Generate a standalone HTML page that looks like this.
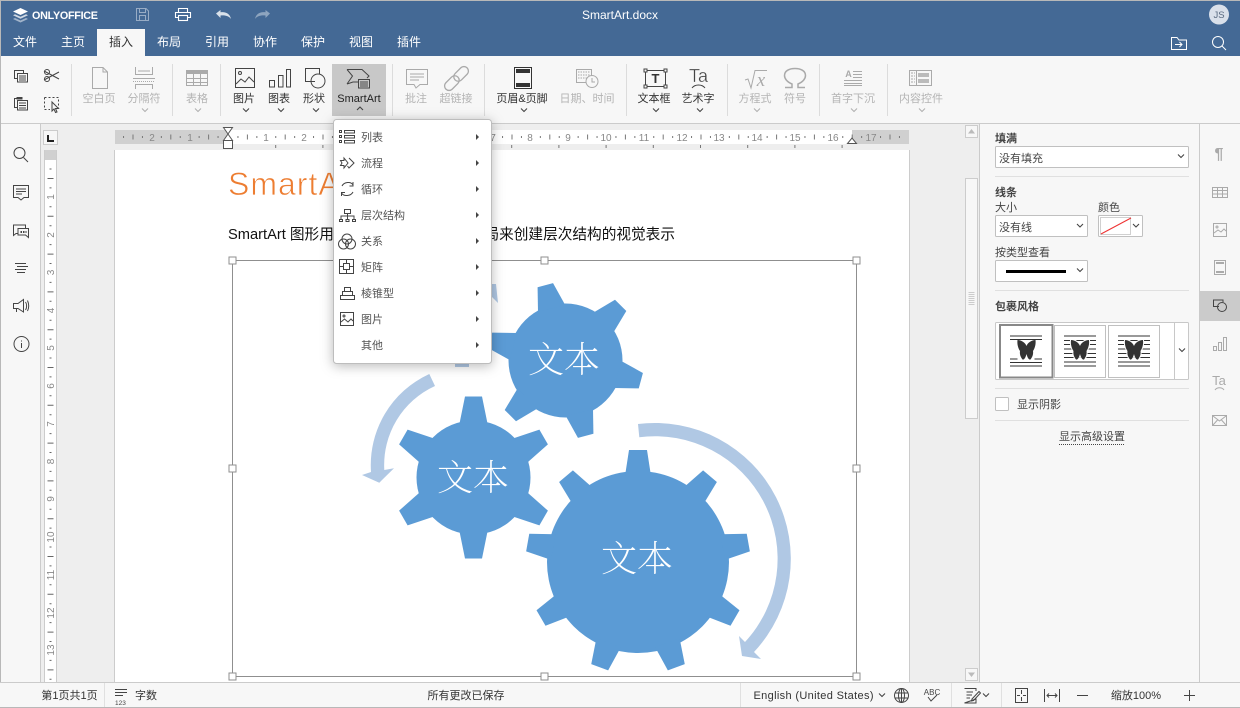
<!DOCTYPE html>
<html><head><meta charset="utf-8"><title>SmartArt.docx</title>
<style>
html,body{margin:0;padding:0;background:#fff;width:1240px;height:708px;overflow:hidden}
svg{display:block;font-family:"Liberation Sans","Noto Sans CJK SC",sans-serif;font-size:11px}
.tab{fill:#fff;font-size:12px;text-anchor:middle}
.l{fill:#333;text-anchor:middle}
.d{fill:#b4b4b4;text-anchor:middle}
.k{fill:none;stroke:#444;stroke-width:1}
.g{fill:none;stroke:#aaa;stroke-width:1}
.w{fill:none;stroke:#fff;stroke-width:1}
.m{fill:#555}
.b{fill:#444;font-weight:bold}
.p{fill:#444}
</style></head><body>
<svg width="1240" height="708" viewBox="0 0 1240 708" xmlns="http://www.w3.org/2000/svg">
<defs>
<path id="cd" d="M-3 -1.5L0 1.5L3 -1.5" fill="none" stroke="#444" stroke-width="1.1"/>
<path id="cg" d="M-3 -1.5L0 1.5L3 -1.5" fill="none" stroke="#b0b0b0" stroke-width="1.1"/>
<path id="ma" d="M0 -3L3 0L0 3Z" fill="#444"/>
<polygon id="t1" points="-9,-112 9,-112 13,-86 -13,-86" fill="#5b9bd5"/>
<polygon id="t2" points="-8.5,-81 8.500,-81 14,-54 -14,-54" fill="#5b9bd5"/>
<polygon id="t3" points="-8,-78 8,-78 14,-54 -14,-54" fill="#5b9bd5"/>
<path id="bf" d="M0 -4C-1 -7 -5 -10 -9 -10C-9.500 -6 -8.500 -2 -6.500 1C-7 4 -6 7 -4 9.500C-2.500 10 -1 8 0 4C1 8 2.500 10 4 9.500C6 7 7 4 6.500 1C8.500 -2 9.500 -6 9 -10C5 -10 1 -7 0 -4Z" fill="#333"/>
<g id="hd"><rect x="-3.500" y="-3.500" width="7" height="7" fill="#fff" stroke="#8f8f8f"/></g>
</defs>

<!-- base -->
<rect width="1240" height="708" fill="#f7f7f7"/>
<rect x="41" y="124" width="938" height="559" fill="#eeeeee"/>
<!-- header -->
<rect x="0" y="0" width="1240" height="56" fill="#446995"/>
<rect x="0" y="0" width="1240" height="1" fill="#b8b8b8"/>
<rect x="97" y="29" width="48" height="27" fill="#f7f7f7"/>
<!-- logo -->
<path d="M20.500 8L28 11.500L20.500 15L13 11.500Z" fill="#fff"/>
<path d="M15 14.200L13 15.200L20.500 18.700L28 15.200L26 14.200L20.500 16.700Z" fill="#fff" opacity=".75"/>
<path d="M15 18L13 19L20.500 22.500L28 19L26 18L20.500 20.500Z" fill="#fff" opacity=".5"/>
<text x="32" y="19" fill="#fff" font-weight="bold" font-size="10.800" textLength="66">ONLYOFFICE</text>
<!-- save etc -->
<g fill="none" stroke="#fff" opacity=".45"><path d="M136.500 8.500H146L148.500 11V20.500H136.500Z"/><path d="M139.500 8.500V12.500H145.500V8.500M139.500 20.500V15.500H145.500V20.500"/></g>
<g fill="none" stroke="#fff" stroke-width="1.100"><path d="M178.500 12V8.500H187.500V12"/><path d="M178 17.500H175.500V12.500H190.500V17.500H188"/><rect x="178.500" y="15.500" width="9" height="5"/></g>
<path d="M216 13.500L220.500 10V12.300C226 11.500 230 14 231 19C229 16 225 15 220.500 15.500V18Z" fill="#fff" opacity=".8"/>
<path d="M270 13.500L265.500 10V12.300C260 11.500 256 14 255 19C257 16 261 15 265.500 15.500V18Z" fill="#fff" opacity=".4"/>
<text x="620" y="19" fill="#fff" font-size="12" text-anchor="middle">SmartArt.docx</text>
<circle cx="1219" cy="14.500" r="10" fill="#d9e0ea"/>
<text x="1219" y="18" fill="#5a6a80" font-size="9.500" text-anchor="middle">JS</text>
<!-- tabs -->
<text class="tab" x="25" y="46">文件</text><text class="tab" x="73" y="46">主页</text>
<text class="tab" x="121" y="46" style="fill:#333">插入</text><text class="tab" x="169" y="46">布局</text>
<text class="tab" x="217" y="46">引用</text><text class="tab" x="265" y="46">协作</text>
<text class="tab" x="313" y="46">保护</text><text class="tab" x="361" y="46">视图</text><text class="tab" x="409" y="46">插件</text>
<path class="w" d="M1171.500 49.500V37.500H1177L1179 40H1186.500V49.500ZM1175 44.500H1182M1179.500 42L1182 44.500L1179.500 47"/>
<g class="w"><circle cx="1218" cy="42" r="5.500"/><path d="M1222 46L1226 50"/></g>

<!-- toolbar borders -->
<rect x="0" y="123" width="1240" height="1" fill="#cbcbcb"/>
<g fill="#dcdcdc"><rect x="71" y="64" width="1" height="52"/><rect x="172" y="64" width="1" height="52"/><rect x="220" y="64" width="1" height="52"/><rect x="392" y="64" width="1" height="52"/><rect x="484" y="64" width="1" height="52"/><rect x="626" y="64" width="1" height="52"/><rect x="727" y="64" width="1" height="52"/><rect x="819" y="64" width="1" height="52"/><rect x="887" y="64" width="1" height="52"/></g>
<rect x="332" y="64" width="54" height="52" fill="#c8c8c8"/>

<!-- clipboard icons -->
<g class="k"><rect x="14.500" y="70.500" width="9" height="8"/><rect x="17.500" y="73.500" width="10" height="8.500" fill="#f7f7f7"/><path d="M19 76H26M19 78H26M19 80H26"/></g>
<g class="k"><path d="M44 71L59 79M44 80L59 72"/><circle cx="47" cy="72" r="2.500"/><circle cx="47" cy="79" r="2.500"/></g>
<g class="k"><path d="M17 98.500H14.500V107.500H17"/><rect x="17.500" y="100.500" width="10" height="9.500" fill="#f7f7f7"/><path d="M19 103H26M19 105.500H26M19 108H26"/><rect x="16.500" y="97" width="6" height="2.500" fill="#444" stroke="none"/></g>
<path class="k" stroke-dasharray="2 2" d="M44.500 97.500H58.500V108M44.500 97.500V109.500H50"/>
<path d="M52 102L58.500 108.500L55.500 108.500L57 112L55.500 112.500L54 109L52 111Z" fill="#f7f7f7" stroke="#444"/>

<!-- disabled insert -->
<path class="g" d="M92.500 67.500H103L107.500 72V88.500H92.500ZM103 67.500V72H107.500"/>
<text class="d" x="99" y="102">空白页</text>
<path class="g" d="M135.500 67V74.500H152.500V67M138 71H150M135.500 89V84.500H152.500V89M133 78.500H155"/>
<path class="g" d="M133 81.500H155" stroke-dasharray="1 1"/>
<text class="d" x="144" y="102">分隔符</text><use href="#cg" x="145" y="110"/>
<rect x="186.500" y="70.500" width="21" height="15" fill="none" stroke="#aaa"/><rect x="186" y="70" width="22" height="4" fill="#aaa"/><path class="g" d="M186 78.500H208M186 82.500H208M193.500 74V86M200.500 74V86"/>
<text class="d" x="197" y="102">表格</text><use href="#cg" x="198" y="110"/>

<!-- image -->
<g class="k"><rect x="235.500" y="68.500" width="19" height="19"/><circle cx="240" cy="73" r="1.500"/><path d="M236 84L241 79L245 82L249 77L254 82"/></g>
<text class="l" x="244" y="102">图片</text><use href="#cd" x="246" y="110"/>
<g class="k"><rect x="269.500" y="80.500" width="5" height="6.500"/><rect x="278.500" y="75.500" width="4.500" height="11.500"/><rect x="286.500" y="69.500" width="4" height="17.500"/></g>
<text class="l" x="279" y="102">图表</text><use href="#cd" x="281" y="110"/>
<g class="k"><path d="M315 81.500H305.500V68.500H319.500V74"/><circle cx="318" cy="81" r="7"/></g>
<text class="l" x="314" y="102">形状</text><use href="#cd" x="316" y="110"/>
<g class="k"><path d="M347 69.500H362L369 76L367 78M358 82H353L347 84M347 69.500L352.500 76L347 84"/><rect x="358.500" y="79.500" width="11" height="8.500" fill="#c8c8c8"/><path d="M360 82H368M360 84H368M360 86H368"/></g>
<text class="l" x="359" y="102" style="fill:#222">SmartArt</text><path d="M357 110L360 107L363 110" fill="none" stroke="#444" stroke-width="1.100"/>
<path class="g" d="M406.500 69.500H427.500V84.500H420L416 88L414 84.500H406.500ZM410 74H424M410 77H424M410 80H419"/>
<text class="d" x="416" y="102">批注</text>
<g transform="translate(456.500 78.500) rotate(-45)" fill="none" stroke="#aaa" stroke-width="1.300"><rect x="-15" y="-4.500" width="17" height="9" rx="4.500"/><rect x="-2" y="-4.500" width="17" height="9" rx="4.500"/></g>
<text class="d" x="456" y="102">超链接</text>

<rect x="514.500" y="67.500" width="17" height="21" fill="none" stroke="#333"/><rect x="516" y="69" width="14" height="4" fill="#333"/><rect x="516" y="83" width="14" height="4" fill="#333"/>
<text class="l" x="522" y="102">页眉&amp;页脚</text><use href="#cd" x="524" y="110"/>
<g class="g"><rect x="576.500" y="69.500" width="15" height="13"/><path d="M578 72H590M578 75H590M578 78H590" stroke-dasharray="1.500 1"/><circle cx="592" cy="81.500" r="6" fill="#f7f7f7"/><path d="M592 78V82H595"/></g>
<text class="d" x="587" y="102">日期、时间</text>

<g class="k"><rect x="645.500" y="70.500" width="20" height="16"/><g fill="#f7f7f7"><rect x="644" y="69" width="3" height="3"/><rect x="664" y="69" width="3" height="3"/><rect x="644" y="85" width="3" height="3"/><rect x="664" y="85" width="3" height="3"/></g></g>
<text x="655.500" y="83" fill="#333" font-size="13" font-weight="bold" text-anchor="middle">T</text>
<text class="l" x="654" y="102">文本框</text><use href="#cd" x="656" y="110"/>
<text x="698.500" y="82" fill="#444" font-size="18" text-anchor="middle" stroke="#f7f7f7" stroke-width=".3">Ta</text><path class="k" d="M692 88C695 84 702 84 705 88"/>
<text class="l" x="698" y="102">艺术字</text><use href="#cd" x="700" y="110"/>

<path class="g" d="M745 80L748 79L751 88L755 70.500H767" stroke-width="1.200"/><text x="761" y="86" fill="#aaa" font-family="Liberation Serif" font-style="italic" font-size="19" text-anchor="middle">x</text>
<text class="d" x="755" y="102">方程式</text><use href="#cg" x="757" y="110"/>
<path d="M785 87.500H792V84C787 82 784.500 78.500 784.500 75.500C784.500 71 789 68.500 795 68.500C801 68.500 805.500 71 805.500 75.500C805.500 78.500 803 82 798 84V87.500H805" fill="none" stroke="#aaa" stroke-width="1.500"/>
<text class="d" x="795" y="102">符号</text>
<text x="848.500" y="77" fill="#aaa" font-size="9" font-weight="bold" text-anchor="middle">A</text><path class="g" d="M853 71.500H862M853 74.500H862M853 77.500H862M844 80.500H862M844 83.500H862M844 85.500H862"/>
<text class="d" x="853" y="102">首字下沉</text><use href="#cg" x="854" y="110"/>
<g class="g"><rect x="909.500" y="70.500" width="22" height="15"/><path d="M916.500 70.500V85.500"/></g><rect x="918" y="73" width="11" height="4" fill="#bbb"/><rect x="918" y="79" width="11" height="4" fill="#bbb"/><path d="M911 73H915M911 76H915M911 79H915M911 82H915" stroke="#aaa" stroke-dasharray="2 1"/>
<text class="d" x="921" y="102">内容控件</text><use href="#cg" x="922" y="110"/>

<!-- left panel -->
<rect x="40" y="124" width="1" height="559" fill="#cbcbcb"/>
<rect x="0" y="0" width="1" height="708" fill="#b8b8b8"/>
<g class="k"><circle cx="19.500" cy="153" r="5.500"/><path d="M23.500 157.500L28 162"/></g>
<g class="k"><path d="M13.500 185.500H28.500V197.500H24L21 200L18 197.500H13.500ZM16 189H26M16 191.500H26M16 194H22"/></g>
<g class="k"><path d="M25.500 228V225H13.500V235.500L16 233.500H18M18 228.500H28.500V237.500L25.500 235H18Z"/></g><path d="M20.500 232H26.500" stroke="#444" stroke-width="2" stroke-dasharray="1.500 1"/>
<path class="k" d="M15 263.500H26M17 266.500H28M15 269.500H26M17 272.500H25"/>
<g class="k"><path d="M13.500 303.500H18L23.500 299.500V312L18 308.500H13.500ZM16.500 308.500V312"/><path d="M25.500 302C27 304 27 308 25.500 310M27.500 300.500C29 304 29 308 27.500 311"/></g>
<g class="k"><circle cx="21.500" cy="344" r="7.500"/></g><path d="M21.500 340.500V341.500M21.500 343V348" stroke="#444"/>

<!-- ruler corner -->
<rect x="43.500" y="130.500" width="14" height="14" fill="#f7f7f7" stroke="#ccc"/>
<path d="M48 135V141H54" fill="none" stroke="#222" stroke-width="2"/>

<!-- page -->
<rect x="114" y="150" width="796" height="533" fill="#fff"/>
<rect x="114" y="150" width="1" height="533" fill="#ccc"/>
<rect x="909" y="150" width="1" height="533" fill="#ccc"/>

<!-- top ruler -->
<rect x="115" y="130" width="794" height="14" fill="#d0d0d0"/>
<rect x="228" y="130" width="624" height="14" fill="#fff"/>
<path d="M237.450 137H909" stroke="#777" stroke-width="2" stroke-dasharray="1 17.900"/>
<path d="M246.900 137H909" stroke="#777" stroke-width="5" stroke-dasharray="1 36.800"/>
<path d="M218.550 137H115" stroke="#777" stroke-width="2" stroke-dasharray="1 17.900"/>
<path d="M209.100 137H115" stroke="#777" stroke-width="5" stroke-dasharray="1 36.800"/>
<path d="M275.200 146.500H852" stroke="#777" stroke-width="3" stroke-dasharray="1 46.200"/>
<g fill="#888" font-size="10" text-anchor="middle">
<text x="152" y="141">2</text><text x="190" y="141">1</text>
<text x="266" y="141">1</text><text x="304" y="141">2</text><text x="341" y="141">3</text><text x="379" y="141">4</text><text x="417" y="141">5</text><text x="455" y="141">6</text><text x="493" y="141">7</text><text x="530" y="141">8</text><text x="568" y="141">9</text><text x="606" y="141">10</text><text x="644" y="141">11</text><text x="682" y="141">12</text><text x="719" y="141">13</text><text x="757" y="141">14</text><text x="795" y="141">15</text><text x="833" y="141">16</text><text x="871" y="141">17</text></g>
<path d="M223.500 127.500H232.500L228 134L232.500 140.500H223.500L228 134Z" fill="#fff" stroke="#555"/>
<rect x="223.500" y="140.500" width="9" height="8" fill="#fff" stroke="#555"/>
<path d="M847.500 143.500L852 138L856.500 143.500Z" fill="#fff" stroke="#555"/>

<!-- vertical ruler -->
<rect x="45" y="150" width="12" height="533" fill="#fff"/>
<rect x="44" y="150" width="1" height="533" fill="#ccc"/><rect x="56" y="150" width="1" height="533" fill="#ccc"/>
<rect x="45" y="150" width="11" height="10" fill="#d0d0d0"/>
<path d="M50.500 168.500V683" stroke="#666" stroke-width="2" stroke-dasharray="1 17.900"/>
<path d="M50.500 178V683" stroke="#666" stroke-width="6" stroke-dasharray="1 36.800"/>
<g fill="#888" font-size="10" text-anchor="middle">
<text transform="translate(54 197) rotate(-90)">1</text><text transform="translate(54 235) rotate(-90)">2</text><text transform="translate(54 272.500) rotate(-90)">3</text><text transform="translate(54 310.500) rotate(-90)">4</text><text transform="translate(54 348) rotate(-90)">5</text><text transform="translate(54 386) rotate(-90)">6</text><text transform="translate(54 424) rotate(-90)">7</text><text transform="translate(54 461.500) rotate(-90)">8</text><text transform="translate(54 499) rotate(-90)">9</text><text transform="translate(54 537) rotate(-90)">10</text><text transform="translate(54 575) rotate(-90)">11</text><text transform="translate(54 613) rotate(-90)">12</text><text transform="translate(54 650) rotate(-90)">13</text></g>

<!-- doc text -->
<text x="228" y="195" fill="#ed7d31" font-size="32" letter-spacing="1" stroke="#fff" stroke-width=".7" style="font-family:'Liberation Sans',sans-serif;paint-order:fill">SmartArt</text>
<text x="228" y="239" fill="#111" font-size="14.670">SmartArt 图形用于</text>
<text x="675" y="239" fill="#111" font-size="14.670" text-anchor="end">局来创建层次结构的视觉表示</text>

<!-- arrows -->
<path d="M638 424A136 136 0 0 1 754 652L761 659L742 656L739 636L745 642A122.500 122.500 0 0 0 639.300 437.300Z" fill="#b0c8e4"/>
<path d="M429.300 374A100.200 100.200 0 0 0 371 472L362 475L379.300 482.700L394 468.300L384.300 470A86.800 86.800 0 0 1 435 386Z" fill="#b0c8e4"/>
<polygon points="492,284 496,284 498,303 492,297" fill="#b0c8e4"/>
<rect x="455" y="360" width="14" height="7" fill="#b0c8e4"/>

<!-- gears -->
<g transform="translate(638 562)">
<circle r="91" fill="#5b9bd5"/>
<use href="#t1"/><use href="#t1" transform="rotate(40)"/><use href="#t1" transform="rotate(80)"/><use href="#t1" transform="rotate(120)"/><use href="#t1" transform="rotate(160)"/><use href="#t1" transform="rotate(200)"/><use href="#t1" transform="rotate(240)"/><use href="#t1" transform="rotate(280)"/><use href="#t1" transform="rotate(320)"/>
</g>
<g transform="translate(473.500 477.500)">
<circle r="57" fill="#5b9bd5"/>
<use href="#t2"/><use href="#t2" transform="rotate(60)"/><use href="#t2" transform="rotate(120)"/><use href="#t2" transform="rotate(180)"/><use href="#t2" transform="rotate(240)"/><use href="#t2" transform="rotate(300)"/>
</g>
<g transform="translate(565.500 360.500)">
<circle r="57" fill="#5b9bd5"/>
<use href="#t3" transform="rotate(-15)"/><use href="#t3" transform="rotate(45)"/><use href="#t3" transform="rotate(105)"/><use href="#t3" transform="rotate(165)"/><use href="#t3" transform="rotate(225)"/><use href="#t3" transform="rotate(285)"/>
</g>
<g fill="#fff" font-size="36" text-anchor="middle" style="font-family:'Liberation Serif','Noto Serif CJK SC',serif;font-weight:200">
<text x="564" y="372">文本</text><text x="473" y="490">文本</text><text x="637" y="571">文本</text></g>

<!-- selection -->
<rect x="232.500" y="260.500" width="624" height="416" fill="none" stroke="#8f8f8f"/>
<use href="#hd" x="232.500" y="260.500"/><use href="#hd" x="544.500" y="260.500"/><use href="#hd" x="856.500" y="260.500"/><use href="#hd" x="232.500" y="468.500"/><use href="#hd" x="856.500" y="468.500"/><use href="#hd" x="232.500" y="676.500"/><use href="#hd" x="544.500" y="676.500"/><use href="#hd" x="856.500" y="676.500"/>

<!-- scrollbar -->
<rect x="964" y="124" width="15" height="559" fill="#eeeeee"/>
<rect x="965.500" y="125.500" width="12" height="12" fill="#f7f7f7" stroke="#ccc"/><path d="M968 133.500L971.500 129L975 133.500Z" fill="#bbb"/>
<rect x="965.500" y="178.500" width="12" height="240" fill="#f7f7f7" stroke="#ccc"/>
<path d="M971.500 292V305" stroke="#ccc" stroke-width="6" stroke-dasharray="1 1"/>
<rect x="965.500" y="668.500" width="12" height="12" fill="#f7f7f7" stroke="#ccc"/><path d="M968 672.500L971.500 677L975 672.500Z" fill="#bbb"/>

<!-- right panel -->
<rect x="980" y="124" width="260" height="559" fill="#f7f7f7"/>
<rect x="979" y="124" width="1" height="559" fill="#cbcbcb"/><rect x="1199" y="124" width="1" height="559" fill="#cbcbcb"/>
<text class="b" x="995" y="142">填满</text>
<rect x="995.500" y="146.500" width="193" height="21" rx="1" fill="#fff" stroke="#c0c0c0"/>
<text class="p" x="999" y="162">没有填充</text><use href="#cd" x="1181" y="156"/>
<rect x="995" y="176" width="194" height="1" fill="#e0e0e0"/>
<text class="b" x="995" y="196">线条</text>
<text class="p" x="995" y="211">大小</text><text class="p" x="1098" y="211">颜色</text>
<rect x="995.500" y="215.500" width="92" height="21" rx="1" fill="#fff" stroke="#c0c0c0"/>
<text class="p" x="999" y="231">没有线</text><use href="#cd" x="1080" y="225.500"/>
<rect x="1098.500" y="215.500" width="44" height="21" rx="1" fill="#fff" stroke="#c0c0c0"/>
<rect x="1100.500" y="217.500" width="30" height="17" fill="#fff" stroke="#d0d0d0"/><path d="M1101 234L1131 218" stroke="#ee3333" stroke-width="1.100"/>
<use href="#cd" x="1136" y="225.500"/>
<text class="p" x="995" y="256">按类型查看</text>
<rect x="995.500" y="260.500" width="92" height="21" rx="1" fill="#fff" stroke="#c0c0c0"/>
<rect x="1006" y="270" width="60" height="3" fill="#000"/><use href="#cd" x="1080" y="270"/>
<rect x="995" y="290" width="194" height="1" fill="#e0e0e0"/>
<text class="b" x="995" y="310">包裹风格</text>
<rect x="995.500" y="322.500" width="193" height="57" rx="1" fill="#fff" stroke="#c8c8c8"/>
<rect x="1174" y="322" width="1" height="58" fill="#c8c8c8"/><use href="#cd" x="1182" y="350"/>
<rect x="1000" y="325" width="52.500" height="52.500" fill="#fff" stroke="#888" stroke-width="2"/>
<rect x="1054.500" y="325.500" width="51" height="52" fill="#fff" stroke="#c0c0c0"/>
<rect x="1108.500" y="325.500" width="51" height="52" fill="#fff" stroke="#c0c0c0"/>
<path d="M1010 336H1042M1010 339.500H1042M1010 359H1017.500M1034.500 359H1042M1010 362.500H1042M1010 366H1042" stroke="#333"/>
<use href="#bf" x="1026.500" y="350"/>
<path d="M1064 336H1096M1064 340.500H1096M1064 344.500H1096M1064 349H1096M1064 353.500H1096M1064 357.500H1096M1064 362H1096M1064 366H1096" stroke="#333"/>
<use href="#bf" x="1080" y="350" stroke="#fff" stroke-width="2" style="paint-order:stroke"/>
<path d="M1118 336H1150M1118 340.500H1150M1118 344.500H1150M1118 349H1150M1118 353.500H1150M1118 357.500H1150M1118 362H1150M1118 366H1150" stroke="#333"/>
<use href="#bf" x="1134" y="350" stroke="#fff" stroke-width="2" style="paint-order:stroke"/>
<rect x="995" y="388" width="194" height="1" fill="#e0e0e0"/>
<rect x="995.500" y="397.500" width="13" height="13" rx="1" fill="#fff" stroke="#c0c0c0"/>
<text class="p" x="1017" y="408">显示阴影</text>
<rect x="995" y="420" width="194" height="1" fill="#e0e0e0"/>
<text class="p" x="1092" y="440" text-anchor="middle">显示高级设置</text>
<path d="M1059 444.500H1125" stroke="#444" stroke-dasharray="1 1"/>

<!-- right tools -->
<rect x="1200" y="291" width="40" height="30" fill="#cbcbcb"/>
<text x="1219" y="159" fill="#aaa" font-size="16" text-anchor="middle" font-weight="bold">¶</text>
<g class="g"><rect x="1212.500" y="187.500" width="15" height="10"/><path d="M1212 190.500H1228M1212 194H1228M1217.500 188V198M1222.500 188V198"/></g>
<g class="g"><rect x="1213.500" y="223.500" width="13" height="13"/><circle cx="1217" cy="227" r="1"/><path d="M1214 233L1218 230L1221 232L1224 229L1226 231"/></g>
<g class="g"><rect x="1214.500" y="260.500" width="11" height="14"/></g><rect x="1216" y="262" width="8" height="2" fill="#aaa"/><rect x="1216" y="271" width="8" height="2" fill="#aaa"/>
<g class="k"><path d="M1219 306.500H1213.500V300H1223V302"/><circle cx="1222" cy="307" r="4.500"/></g>
<g class="g"><rect x="1213.500" y="346.500" width="3" height="4"/><rect x="1218.500" y="342.500" width="3" height="8"/><rect x="1223.500" y="337.500" width="3" height="13"/></g>
<text x="1219" y="385" fill="#aaa" font-size="13" text-anchor="middle">Ta</text><path class="g" d="M1215 390C1217 387 1222 387 1224 390"/>
<g class="g"><rect x="1212.500" y="415.500" width="14" height="10"/><path d="M1213 416L1219.500 421L1226 416M1213 425L1217.500 420M1226 425L1221.500 420"/></g>

<!-- status bar -->
<rect x="0" y="683" width="1240" height="24" fill="#f7f7f7"/>
<rect x="0" y="682" width="1240" height="1" fill="#cbcbcb"/>
<rect x="0" y="707" width="1240" height="1" fill="#b8b8b8"/>
<g fill="#e0e0e0"><rect x="104" y="683" width="1" height="24"/><rect x="740" y="683" width="1" height="24"/><rect x="951" y="683" width="1" height="24"/><rect x="1001" y="683" width="1" height="24"/></g>
<text class="l" x="69.500" y="699" style="fill:#333">第1页共1页</text>
<path class="k" d="M115 689.500H127M115 692.500H127M115 695.500H123"/><text x="115" y="705" fill="#444" font-size="6.500">123</text>
<text class="l" x="146" y="699" style="fill:#333">字数</text>
<text class="l" x="466" y="699" style="fill:#333">所有更改已保存</text>
<text x="753.500" y="699" fill="#333" textLength="120">English (United States)</text><use href="#cd" x="882" y="695"/>
<g class="k"><circle cx="901.500" cy="695.500" r="7"/><ellipse cx="901.500" cy="695.500" rx="3" ry="7"/><path d="M895 693H908M895 698H908M901.500 688V703"/></g>
<text x="932" y="695" fill="#444" font-size="8" text-anchor="middle">ABC</text><path class="k" d="M928 697L931 701L937 695"/>
<g class="k"><path d="M964.500 688.500H976V691M976 699V703H964.500ZM966.500 692H973M966.500 695H972M966.500 698H970"/><path d="M972 699L979 691.500L980.500 693L973.500 700.500L971.500 701Z"/></g><use href="#cd" x="986" y="695"/>
<rect x="1015.500" y="688.500" width="12" height="14" fill="none" stroke="#444"/><path d="M1021.500 690V694M1021.500 697V701M1017 695.500H1020M1023 695.500H1026" stroke="#444"/>
<path class="k" d="M1044.500 689V702M1059.500 689V702M1047 695.500H1057M1049 693.500L1047 695.500L1049 697.500M1055 693.500L1057 695.500L1055 697.500"/>
<rect x="1077" y="695" width="11" height="1" fill="#444"/>
<text class="l" x="1136" y="699" style="fill:#333">缩放100%</text>
<path class="k" d="M1184 695.500H1195M1189.500 690V701"/>

<!-- menu -->
<rect x="333.500" y="119.500" width="158" height="244" rx="3" fill="#fff" stroke="#bdbdbd" style="filter:drop-shadow(0 2px 6px rgba(0,0,0,.28))"/>
<g fill="#555">
<text x="361" y="141">列表</text><text x="361" y="167">流程</text><text x="361" y="193">循环</text><text x="361" y="219">层次结构</text><text x="361" y="245">关系</text><text x="361" y="271">矩阵</text><text x="361" y="297">棱锥型</text><text x="361" y="323">图片</text><text x="361" y="349">其他</text></g>
<use href="#ma" x="476" y="137"/><use href="#ma" x="476" y="163"/><use href="#ma" x="476" y="189"/><use href="#ma" x="476" y="215"/><use href="#ma" x="476" y="241"/><use href="#ma" x="476" y="267"/><use href="#ma" x="476" y="293"/><use href="#ma" x="476" y="319"/><use href="#ma" x="476" y="345"/>
<g class="k">
<path d="M339.500 130.500h2v2h-2zM339.500 135.500h2v2h-2zM339.500 140.500h2v2h-2z"/><rect x="344.500" y="130.500" width="10" height="2.500"/><rect x="344.500" y="135.500" width="10" height="2.500"/><rect x="344.500" y="140.500" width="10" height="2.500"/>
<path d="M340.500 160.500H344V158L348 163L344 168V165.500H340.500L342 163ZM349 158L354 163L349 168L347.500 166"/>
<path d="M342 186C344 182 351 181 353 185M353 192C351 196 344 197 341.500 193M353 182V186H349.500M341.500 196V192.500H345"/>
<rect x="344.500" y="209.500" width="6" height="4"/><path d="M347.500 213.500V216M341 219V216H354V219M347.500 216V219"/><rect x="339.500" y="219.500" width="3" height="2"/><rect x="346" y="219.500" width="3" height="2"/><rect x="352.500" y="219.500" width="3" height="2"/>
<circle cx="347" cy="239" r="5"/><circle cx="343.500" cy="244" r="5"/><circle cx="350.500" cy="244" r="5"/>
<rect x="339.500" y="259.500" width="14" height="14"/><rect x="343.500" y="263.500" width="6" height="6"/><path d="M346.500 260V263M346.500 270V273M340 266.500H343M350 266.500H353"/>
<path d="M344.500 287.500H350.500V291.500H344.500ZM342.500 291.500H352.500V295.500H342.500ZM340.500 295.500H354.500V299.500H340.500Z"/>
<rect x="340.500" y="312.500" width="13" height="13"/><circle cx="344" cy="316" r="1"/><path d="M341 322L344.500 319L348 322L351 319L353 321"/>
</g>
</svg>
</body></html>
